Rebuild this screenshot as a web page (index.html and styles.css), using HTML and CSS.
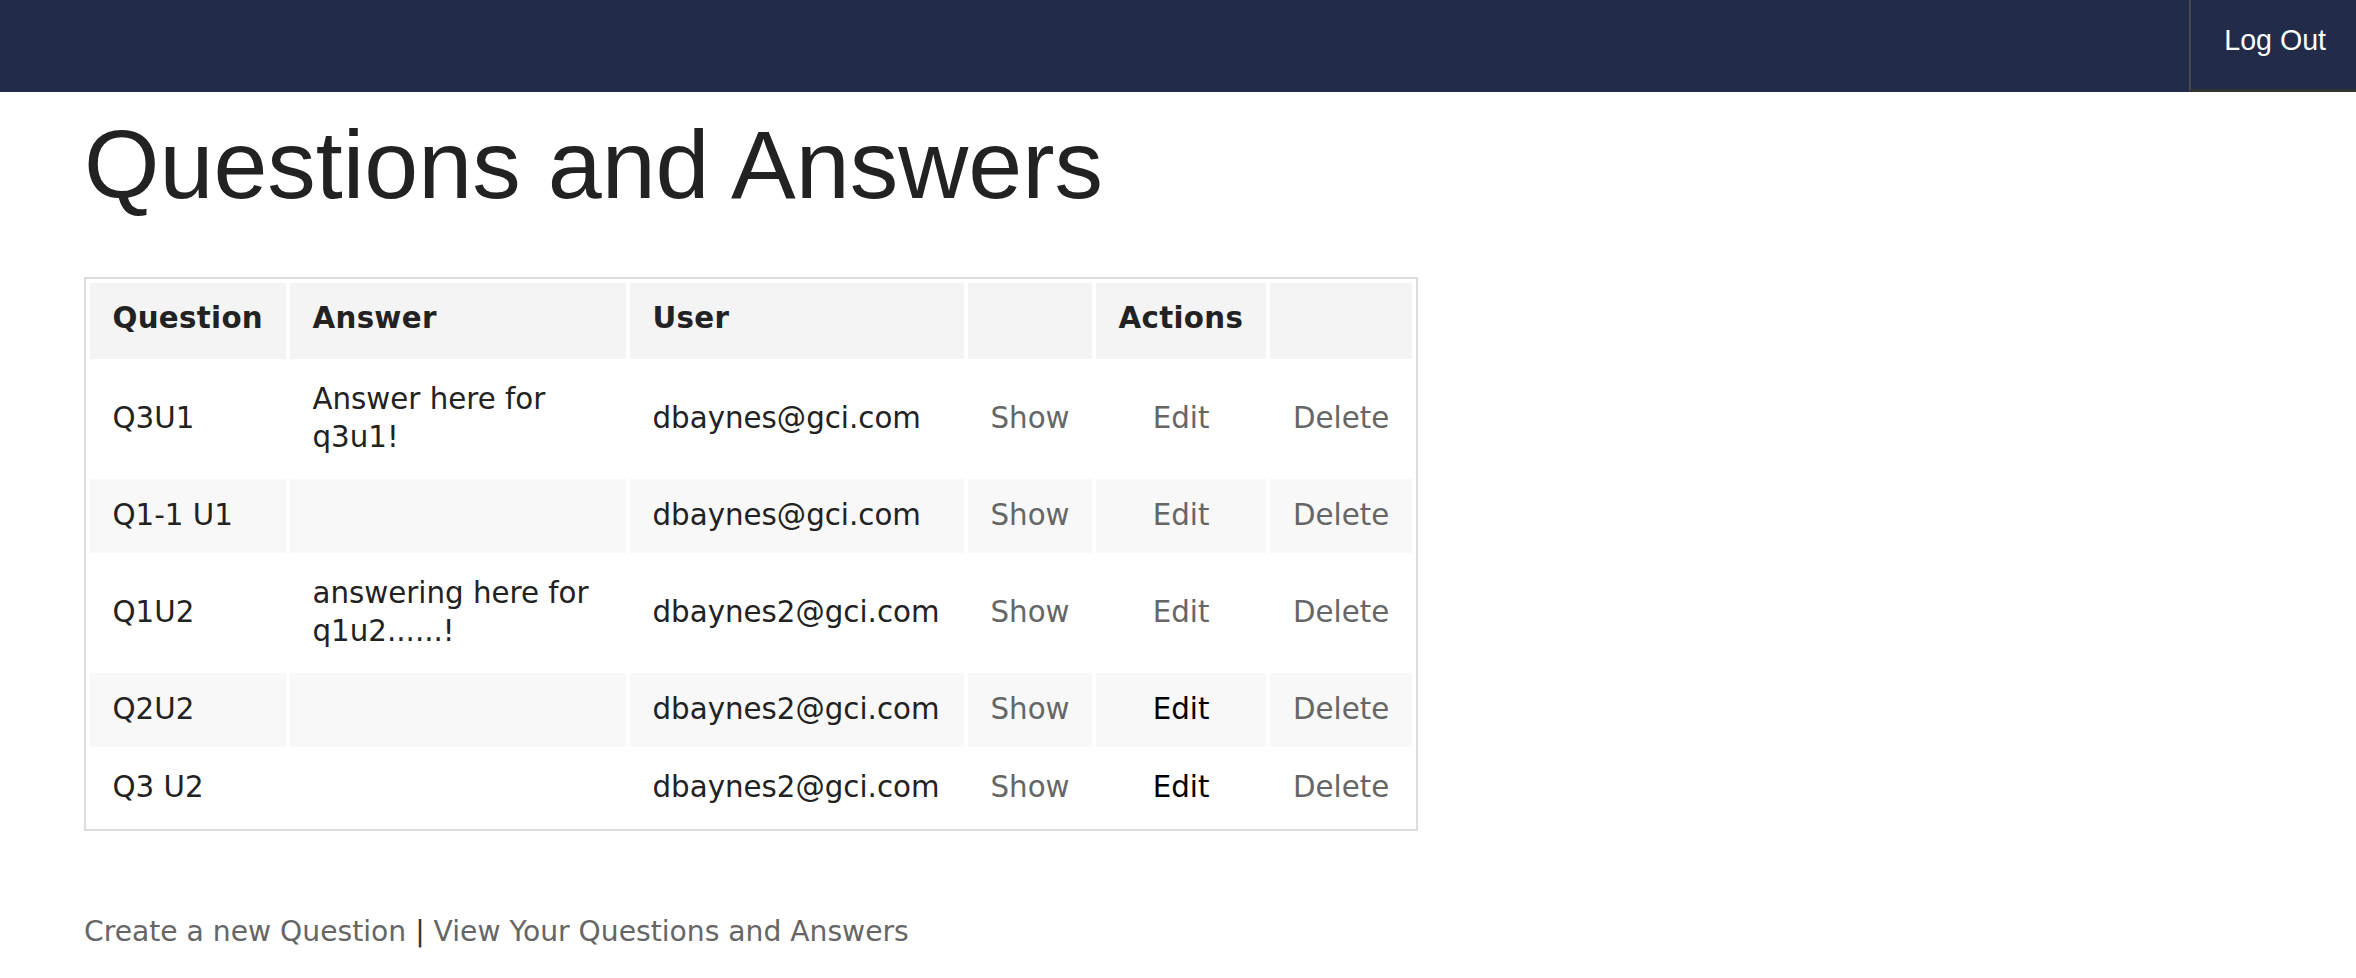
FILE: index.html
```html
<!DOCTYPE html>
<html lang="en">
<head>
<meta charset="utf-8">
<title>Questions and Answers</title>
<link rel="stylesheet" href="styles.css">
</head>
<body>
<nav class="topbar">
  <a class="topbar-link" href="#">Log Out</a>
</nav>
<main class="page">
  <h1 class="page-title">Questions and Answers</h1>
  <table class="qa-table">
    <thead>
      <tr>
        <th class="col-q">Question</th>
        <th class="col-a">Answer</th>
        <th class="col-u">User</th>
        <th class="col-show"></th>
        <th class="col-edit">Actions</th>
        <th class="col-del"></th>
      </tr>
    </thead>
    <tbody>
      <tr>
        <td>Q3U1</td>
        <td>Answer here for q3u1!</td>
        <td>dbaynes@gci.com</td>
        <td class="act"><a href="#">Show</a></td>
        <td class="act"><a href="#">Edit</a></td>
        <td class="act"><a href="#">Delete</a></td>
      </tr>
      <tr>
        <td>Q1-1 U1</td>
        <td></td>
        <td>dbaynes@gci.com</td>
        <td class="act"><a href="#">Show</a></td>
        <td class="act"><a href="#">Edit</a></td>
        <td class="act"><a href="#">Delete</a></td>
      </tr>
      <tr>
        <td>Q1U2</td>
        <td>answering here for q1u2......!</td>
        <td>dbaynes2@gci.com</td>
        <td class="act"><a href="#">Show</a></td>
        <td class="act"><a href="#">Edit</a></td>
        <td class="act"><a href="#">Delete</a></td>
      </tr>
      <tr>
        <td>Q2U2</td>
        <td></td>
        <td>dbaynes2@gci.com</td>
        <td class="act"><a href="#">Show</a></td>
        <td class="act"><a class="visited" href="#">Edit</a></td>
        <td class="act"><a href="#">Delete</a></td>
      </tr>
      <tr>
        <td>Q3 U2</td>
        <td></td>
        <td>dbaynes2@gci.com</td>
        <td class="act"><a href="#">Show</a></td>
        <td class="act"><a class="visited" href="#">Edit</a></td>
        <td class="act"><a href="#">Delete</a></td>
      </tr>
    </tbody>
  </table>
  <p class="footer-links">
    <a href="#">Create a new Question</a> <span class="sep">|</span> <a href="#">View Your Questions and Answers</a>
  </p>
</main>
</body>
</html>
```

FILE: styles.css
```css
html, body {
  margin: 0;
  padding: 0;
  background: #ffffff;
}

body {
  font-family: "DejaVu Sans", Verdana, sans-serif;
  color: #222222;
}

a {
  text-decoration: none;
  color: #666666;
}

.topbar {
  height: 92px;
  background: #222c48;
  display: flex;
  justify-content: flex-end;
}

.topbar-link {
  box-sizing: border-box;
  height: 92px;
  padding: 24px 30px 0 33px;
  border-left: 2px solid #474a52;
  border-bottom: 3px solid #333333;
  font-family: "Liberation Sans", Arial, Helvetica, sans-serif;
  font-size: 28.6px;
  line-height: 32px;
  color: #ffffff;
}

.page {
  padding: 0 84px;
}

.page-title {
  margin: 20px 0 0 0;
  font-family: "Liberation Sans", Arial, Helvetica, sans-serif;
  font-weight: normal;
  font-size: 97px;
  line-height: 1.1;
  color: #222222;
}

.qa-table {
  margin-top: 58px;
  border: 2px solid #dddddd;
  border-collapse: separate;
  border-spacing: 4px;
  font-size: 29.3px;
  line-height: 38px;
}

.qa-table th {
  background: #f4f4f4;
  font-weight: bold;
  text-align: left;
  padding: 16px 22.5px 22px 22.5px;
  color: #222222;
  letter-spacing: 0.3px;
}

.qa-table td {
  padding: 17px 22.5px 19px 22.5px;
  vertical-align: middle;
  color: #222222;
}

.qa-table tbody tr:nth-child(even) td {
  background: #f8f8f8;
}

.qa-table td.act {
  text-align: center;
}

.qa-table a.visited {
  color: #000000;
}

.col-q { width: 151px; }
.col-a { width: 291px; }
.col-u { width: 289px; }
.col-show { width: 79px; }
.col-edit { width: 125px; }
.col-del { width: 97px; }

.footer-links {
  margin: 82px 0 0 0;
  font-size: 28.2px;
  line-height: 38px;
  color: #666666;
}

.footer-links .sep {
  color: #333333;
}
```
